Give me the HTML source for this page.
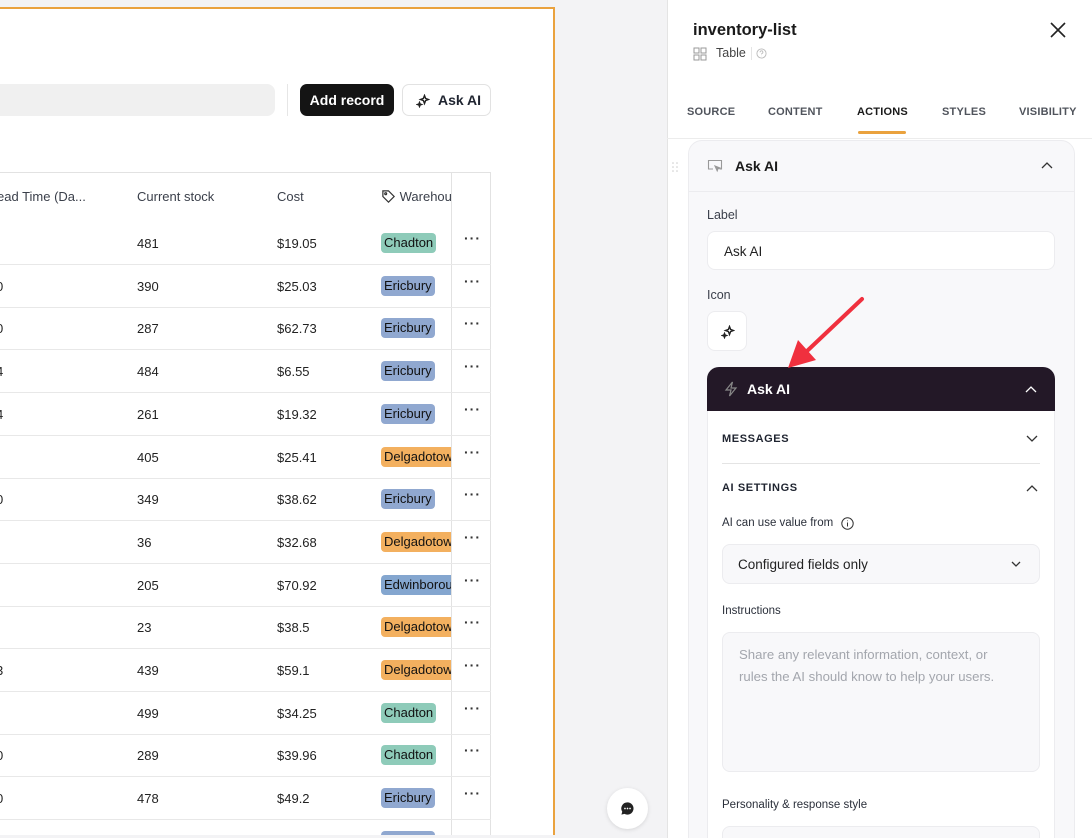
<!DOCTYPE html>
<html style="overflow:hidden;height:838px"><head><meta charset="utf-8"><style>
*{box-sizing:border-box;margin:0;padding:0}
html,body{overflow:hidden}
body{width:1092px;height:838px;background:#f3f3f5;font-family:"Liberation Sans",sans-serif;color:#1f2430;position:relative}
#wrap{position:absolute;left:0;top:0;width:1092px;height:838px;overflow:hidden}
.abs{position:absolute}
#canvas{left:0;top:7px;width:555px;height:828px;background:#fff;border-top:2px solid #eaa23e;border-right:2px solid #eaa23e}
.search{left:0;top:84px;width:275px;height:32px;background:#f0f0f0;border-radius:0 8px 8px 0}
.vsep{left:287px;top:84px;width:1px;height:32px;background:#e6e6e6}
.btn-dark{left:300px;top:84px;width:94px;height:32px;background:#141414;border-radius:7px;color:#fff;font-size:14px;font-weight:bold;line-height:32px;text-align:center}
.btn-light{left:402px;top:84px;width:89px;height:32px;border:1px solid #e2e2e2;border-radius:7px;font-size:14px;font-weight:bold;line-height:30px;color:#1f2430}
.tbl{left:0;top:172px;width:491px;height:663px;border-top:1px solid #e2e2e2;border-right:1px solid #e2e2e2;overflow:hidden}
.colsep{left:451px;top:172px;width:1px;height:663px;background:#e2e2e2}
.th{top:189px;font-size:13px;color:#3a3f4a}
#rows{position:absolute;left:0;top:0;width:491px;height:835px;overflow:hidden}
.row{left:0;width:491px;height:43px;border-bottom:1px solid #e8e8e8;font-size:13px;color:#222}
.row span{position:absolute;top:14px}
.tag{position:absolute;left:381px;top:11px;height:20px;line-height:20px;padding:0 3px;border-radius:4px;font-size:13px;color:#111;white-space:nowrap;overflow:hidden}
.dots{position:absolute;left:464px;top:8px;font-size:14px;letter-spacing:1px;color:#333;font-weight:bold}
#panel{left:667px;top:0;width:425px;height:838px;background:#fff;border-left:1px solid #e4e4e4}
.tab{top:106px;font-size:11px;font-weight:bold;color:#50545c;letter-spacing:.2px}
.card{left:688px;top:140px;width:387px;height:720px;background:#f8f8fa;border:1px solid #ececef;border-radius:14px}
.lbl{font-size:12.5px;color:#3a3f4a}
.input{background:#fff;border:1px solid #ececef;border-radius:8px}
.dark{left:707px;top:367px;width:348px;height:44px;background:#231827;border-radius:12px 12px 0 0;color:#fff;font-weight:bold;font-size:14px}
.inner{left:707px;top:411px;width:348px;height:440px;background:#fff;border-left:1px solid #ececef;border-right:1px solid #ececef}
.sec{font-size:11px;font-weight:bold;letter-spacing:.6px;color:#1f2430}
</style></head><body><div id="wrap">
<div id="canvas" class="abs"></div>
<div class="abs search"></div>
<div class="abs vsep"></div>
<div class="abs btn-dark">Add record</div>
<div class="abs btn-light"><svg class="abs" style="left:13px;top:9px" width="14" height="14" viewBox="0 0 14 14" fill="none" stroke="#222" stroke-width="1.4"><path d="M8.5 1.5 9.6 4.4 12.5 5.5 9.6 6.6 8.5 9.5 7.4 6.6 4.5 5.5 7.4 4.4Z"/><path d="M3.5 8.5 4.1 10 5.5 10.5 4.1 11 3.5 12.5 2.9 11 1.5 10.5 2.9 10Z"/></svg><span class="abs" style="left:35px;top:0">Ask AI</span></div>
<div class="abs tbl"></div>
<div class="abs colsep"></div>
<div class="abs th" style="left:-3px">ead Time (Da...</div>
<div class="abs th" style="left:137px">Current stock</div>
<div class="abs th" style="left:277px">Cost</div>
<div class="abs th" style="left:381px;width:70px;overflow:hidden;white-space:nowrap"><svg style="vertical-align:-3px" width="15" height="15" viewBox="0 0 16 16" fill="none" stroke="#333" stroke-width="1.3"><path d="M2 2h6l6 6-6 6-6-6z"/><circle cx="5" cy="5" r="1"/></svg> <span>Warehouse</span></div>
<div id="rows"></div>
<div class="abs" style="left:607px;top:788px;width:41px;height:41px;border-radius:50%;background:#fff;box-shadow:0 1px 4px rgba(0,0,0,.12)"><svg class="abs" style="left:13px;top:13px" width="15" height="15" viewBox="0 0 16 16"><path d="M8 1.5a6.5 6.5 0 1 1-3.2 12.2L1.5 14.5l.9-3A6.5 6.5 0 0 1 8 1.5z" fill="#222"/><circle cx="5.3" cy="8" r=".9" fill="#fff"/><circle cx="8" cy="8" r=".9" fill="#fff"/><circle cx="10.7" cy="8" r=".9" fill="#fff"/></svg></div>

<div id="panel" class="abs"></div>
<div class="abs" style="left:693px;top:21px;font-size:16.5px;font-weight:bold;color:#1a1a1a">inventory-list</div>
<svg class="abs" style="left:1049px;top:21px" width="18" height="18" viewBox="0 0 18 18" stroke="#222" stroke-width="1.6"><path d="M2 2l14 14M16 2 2 16"/></svg>
<svg class="abs" style="left:693px;top:47px" width="14" height="14" viewBox="0 0 14 14" fill="none" stroke="#999" stroke-width="1"><rect x="1" y="1" width="5" height="5"/><rect x="8" y="1" width="5" height="5"/><rect x="1" y="8" width="5" height="5"/><rect x="8" y="8" width="5" height="5"/></svg>
<div class="abs" style="left:716px;top:46px;font-size:12.5px;color:#444">Table</div>
<div class="abs" style="left:751px;top:47px;width:1px;height:13px;background:#e4e4e4"></div>
<svg class="abs" style="left:756px;top:48px" width="11" height="11" viewBox="0 0 12 12" fill="none" stroke="#bbb" stroke-width="1"><circle cx="6" cy="6" r="5"/><path d="M4.5 4.7a1.5 1.5 0 1 1 2 1.3c-.4.2-.5.5-.5.9M6 8.6v.2"/></svg>
<div class="abs tab" style="left:687px">SOURCE</div>
<div class="abs tab" style="left:768px">CONTENT</div>
<div class="abs tab" style="left:857px;color:#1a1a1a">ACTIONS</div>
<div class="abs tab" style="left:942px">STYLES</div>
<div class="abs tab" style="left:1019px">VISIBILITY</div>
<div class="abs" style="left:858px;top:131px;width:48px;height:3px;background:#eaa23e;border-radius:2px"></div>
<div class="abs" style="left:667px;top:138px;width:425px;height:1px;background:#ececec"></div>
<svg class="abs" style="left:672px;top:162px" width="6" height="10" viewBox="0 0 6 10" fill="#ccc"><circle cx="1" cy="1" r=".8"/><circle cx="5" cy="1" r=".8"/><circle cx="1" cy="5" r=".8"/><circle cx="5" cy="5" r=".8"/><circle cx="1" cy="9" r=".8"/><circle cx="5" cy="9" r=".8"/></svg>
<div class="abs card"></div>
<div class="abs" style="left:689px;top:191px;width:385px;height:1px;background:#ececef"></div>
<svg class="abs" style="left:707px;top:159px" width="17" height="15" viewBox="0 0 17 15" fill="none" stroke="#999" stroke-width="1.1"><path d="M6 10H1.5V1.5h13V10h-2"/><path d="M8 7l5 2-2 .8-.8 2z" fill="#999"/></svg>
<div class="abs" style="left:735px;top:158px;font-size:14px;font-weight:bold;color:#1a1a1a">Ask AI</div>
<svg class="abs" style="left:1041px;top:161px" width="12" height="8" viewBox="0 0 12 8" fill="none" stroke="#333" stroke-width="1.3"><path d="M1 7l5-5 5 5"/></svg>
<div class="abs lbl" style="left:707px;top:208px">Label</div>
<div class="abs input" style="left:707px;top:231px;width:348px;height:39px"><span class="abs" style="left:16px;top:12px;font-size:13.5px;color:#222">Ask AI</span></div>
<div class="abs lbl" style="left:707px;top:288px">Icon</div>
<div class="abs input" style="left:707px;top:311px;width:40px;height:40px"><svg class="abs" style="left:13px;top:13px" width="14" height="14" viewBox="0 0 14 14" fill="none" stroke="#222" stroke-width="1.4"><path d="M8.5 1.5 9.6 4.4 12.5 5.5 9.6 6.6 8.5 9.5 7.4 6.6 4.5 5.5 7.4 4.4Z"/><path d="M3.5 8.5 4.1 10 5.5 10.5 4.1 11 3.5 12.5 2.9 11 1.5 10.5 2.9 10Z"/></svg></div>
<div class="abs inner"></div>
<div class="abs dark"><svg class="abs" style="left:17px;top:14px" width="14" height="16" viewBox="0 0 14 16" fill="none" stroke="#888" stroke-width="1.2"><path d="M8.5 1 2 9h5l-1.5 6L12 7H7z"/></svg><span class="abs" style="left:40px;top:14px">Ask AI</span><svg class="abs" style="left:318px;top:18px" width="12" height="8" viewBox="0 0 12 8" fill="none" stroke="#fff" stroke-width="1.3"><path d="M1 7l5-5 5 5"/></svg></div>
<svg class="abs" style="left:786px;top:296px" width="80" height="75" viewBox="0 0 80 75"><path d="M76 3 20 56" stroke="#f0303e" stroke-width="4" stroke-linecap="round"/><path d="M2 72 12 44 30 64Z" fill="#f0303e"/></svg>
<div class="abs sec" style="left:722px;top:433px">MESSAGES</div>
<svg class="abs" style="left:1026px;top:435px" width="12" height="8" viewBox="0 0 12 8" fill="none" stroke="#333" stroke-width="1.3"><path d="M1 1l5 5 5-5"/></svg>
<div class="abs" style="left:722px;top:463px;width:318px;height:1px;background:#e4e4e4"></div>
<div class="abs sec" style="left:722px;top:482px">AI SETTINGS</div>
<svg class="abs" style="left:1026px;top:484px" width="12" height="8" viewBox="0 0 12 8" fill="none" stroke="#333" stroke-width="1.3"><path d="M1 7l5-5 5 5"/></svg>
<div class="abs" style="left:722px;top:517px;font-size:11.5px;color:#2a2f3a">AI can use value from</div>
<svg class="abs" style="left:841px;top:517px" width="13" height="13" viewBox="0 0 13 13" fill="none" stroke="#333" stroke-width="1"><circle cx="6.5" cy="6.5" r="5.7"/><path d="M6.5 5.5v4M6.5 3.5v.6"/></svg>
<div class="abs" style="left:722px;top:544px;width:318px;height:40px;background:#f8f8fa;border:1px solid #ececef;border-radius:8px"><span class="abs" style="left:15px;top:12px;font-size:13.5px;color:#222">Configured fields only</span><svg class="abs" style="left:288px;top:16px" width="10" height="7" viewBox="0 0 10 7" fill="none" stroke="#333" stroke-width="1.3"><path d="M1 1l4 4 4-4"/></svg></div>
<div class="abs" style="left:722px;top:605px;font-size:11.5px;color:#2a2f3a">Instructions</div>
<div class="abs" style="left:722px;top:632px;width:318px;height:140px;background:#f8f8fa;border:1px solid #ececef;border-radius:8px"><div class="abs" style="left:16px;top:11px;font-size:13.2px;line-height:22px;color:#a3a6ad;width:272px">Share any relevant information, context, or rules the AI should know to help your users.</div></div>
<div class="abs" style="left:722px;top:799px;font-size:11.5px;color:#2a2f3a">Personality &amp; response style</div>
<div class="abs" style="left:722px;top:826px;width:318px;height:40px;background:#f8f8fa;border:1px solid #ececef;border-radius:8px"></div>
<div class="abs" style="left:0;top:835px;width:555px;height:3px;background:#f3f3f5"></div>
</div>
<script>
var d=[["","481","$19.05","Chadton"],["0","390","$25.03","Ericbury"],["0","287","$62.73","Ericbury"],["4","484","$6.55","Ericbury"],["4","261","$19.32","Ericbury"],["","405","$25.41","Delgadotown"],["0","349","$38.62","Ericbury"],["","36","$32.68","Delgadotown"],["","205","$70.92","Edwinborough"],["","23","$38.5","Delgadotown"],["3","439","$59.1","Delgadotown"],["","499","$34.25","Chadton"],["0","289","$39.96","Chadton"],["0","478","$49.2","Ericbury"],["","","","Ericbury"]];
var c={Chadton:"#8ecbb9",Ericbury:"#90a8d0",Delgadotown:"#f3b05f",Edwinborough:"#84a6cf"};
var h="";
d.forEach(function(r,i){var t=222+i*42.7;var w=(r[3]=="Chadton"||r[3]=="Ericbury")?"":"width:70px;border-radius:4px 0 0 4px;";
h+='<div class="abs row" style="top:'+t+'px"><span style="left:-4px">'+r[0]+'</span><span style="left:137px">'+r[1]+'</span><span style="left:277px">'+r[2]+'</span><div class="tag" style="background:'+c[r[3]]+';'+w+'">'+r[3]+'</div><div class="dots">···</div></div>';});
document.getElementById("rows").innerHTML=h;
</script>
</body></html>
